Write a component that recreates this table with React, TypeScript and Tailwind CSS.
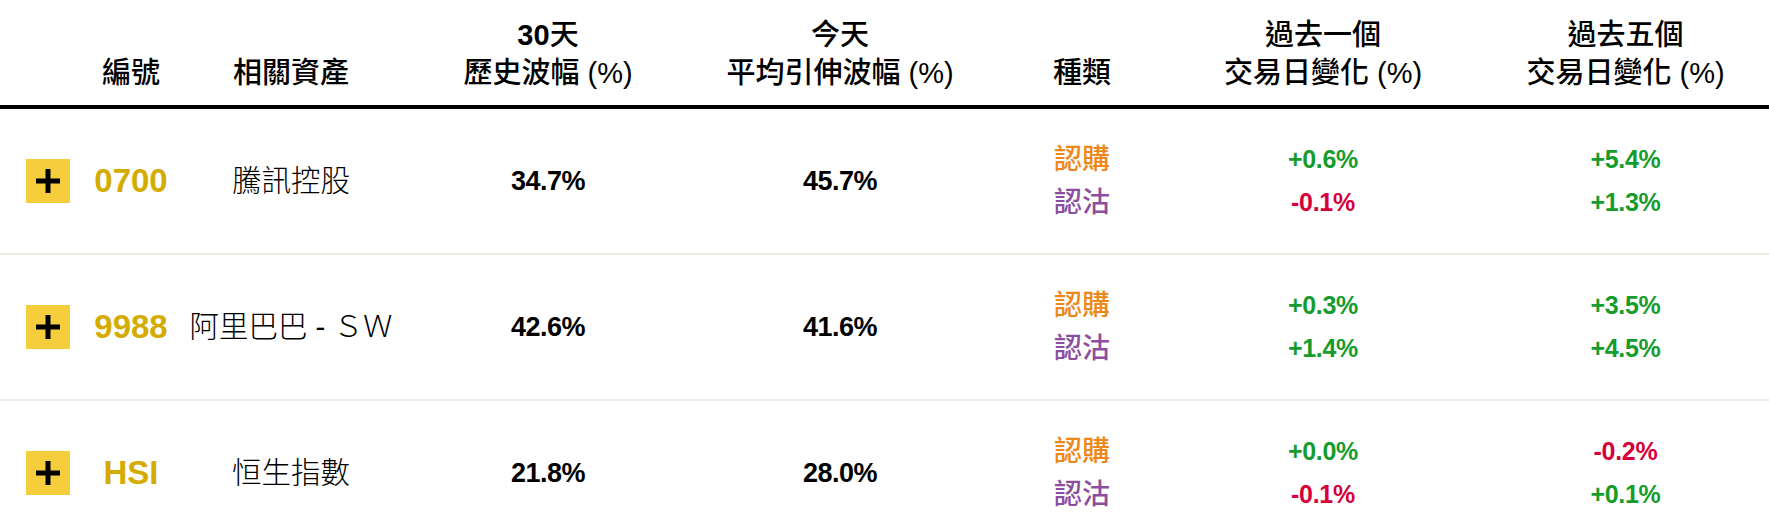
import React from "react";

type Row = {
  code: string;
  name: string;
  hist: string;
  implied: string;
  d1: [string, string];
  d5: [string, string];
};

const rows: Row[] = [
  { code: "0700", name: "騰訊控股", hist: "34.7%", implied: "45.7%", d1: ["+0.6%", "-0.1%"], d5: ["+5.4%", "+1.3%"] },
  { code: "9988", name: "阿里巴巴 - ＳＷ", hist: "42.6%", implied: "41.6%", d1: ["+0.3%", "+1.4%"], d5: ["+3.5%", "+4.5%"] },
  { code: "HSI", name: "恒生指數", hist: "21.8%", implied: "28.0%", d1: ["+0.0%", "-0.1%"], d5: ["-0.2%", "+0.1%"] },
];

const cols = "grid grid-cols-[96px_70px_250px_264px_320px_164px_318px_1fr]";
const cell = "flex justify-center whitespace-nowrap";

const tone = (v: string) => (v.startsWith("-") ? "text-[#d6003a]" : "text-[#169c2c]");

const PlusBox = () => (
  <div className="w-[44px] h-[44px] bg-[#f5cd3d] flex items-center justify-center">
    <svg width="24" height="24" viewBox="0 0 24 24">
      <rect x="9.5" y="0" width="5" height="24" fill="#000" />
      <rect x="0" y="9.5" width="24" height="5" fill="#000" />
    </svg>
  </div>
);

const App = () => {
  return (
    <div className="w-full bg-white text-black font-['Liberation_Sans','Noto_Sans_CJK_TC',sans-serif]">
      <div className={`${cols} h-[109px] items-end pb-[13px] text-[29px] leading-[38px] font-medium border-b-4 border-black`}>
        <div />
        <div className={cell}>編號</div>
        <div className={cell}>相關資產</div>
        <div className="flex flex-col items-center whitespace-nowrap">
          <span><span className="font-bold">30</span>天</span>
          <span>歷史波幅 <span className="font-normal">(%)</span></span>
        </div>
        <div className="flex flex-col items-center whitespace-nowrap">
          <span>今天</span>
          <span>平均引伸波幅 <span className="font-normal">(%)</span></span>
        </div>
        <div className={cell}>種類</div>
        <div className="flex flex-col items-center whitespace-nowrap">
          <span>過去一個</span>
          <span>交易日變化 <span className="font-normal">(%)</span></span>
        </div>
        <div className="flex flex-col items-center whitespace-nowrap">
          <span>過去五個</span>
          <span>交易日變化 <span className="font-normal">(%)</span></span>
        </div>
      </div>

      {rows.map((r) => (
        <div key={r.code} className={`${cols} h-[146px] items-center border-b-2 border-[#eeebe3]`}>
          <div className="flex justify-center">
            <PlusBox />
          </div>
          <div className={`${cell} text-[33px] font-bold text-[#d4ac00]`}>{r.code}</div>
          <div className={`${cell} text-[29.5px] font-light`}>{r.name}</div>
          <div className={`${cell} text-[27px] font-bold tracking-[-0.5px]`}>{r.hist}</div>
          <div className={`${cell} text-[27px] font-bold tracking-[-0.5px]`}>{r.implied}</div>
          <div className="flex flex-col items-center text-[28px] leading-[43px] font-medium">
            <span className="text-[#ef8718]">認購</span>
            <span className="text-[#8e4e9f]">認沽</span>
          </div>
          <div className="flex flex-col items-center text-[25px] leading-[43px] font-bold tracking-[-0.3px]">
            <span className={tone(r.d1[0])}>{r.d1[0]}</span>
            <span className={tone(r.d1[1])}>{r.d1[1]}</span>
          </div>
          <div className="flex flex-col items-center text-[25px] leading-[43px] font-bold tracking-[-0.3px]">
            <span className={tone(r.d5[0])}>{r.d5[0]}</span>
            <span className={tone(r.d5[1])}>{r.d5[1]}</span>
          </div>
        </div>
      ))}
    </div>
  );
};

export default App;
